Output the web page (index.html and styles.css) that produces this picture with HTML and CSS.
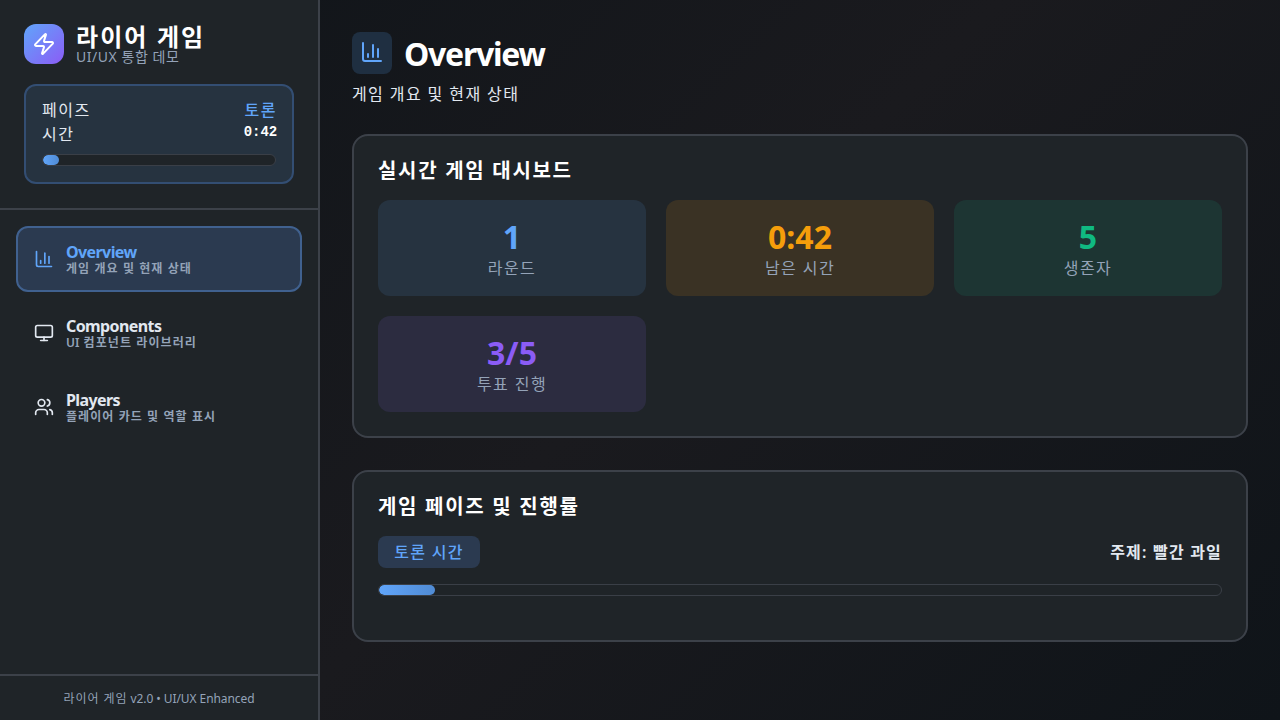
FILE: index.html
```html
<!DOCTYPE html>
<html lang="ko">
<head>
<meta charset="utf-8">
<title>라이어 게임</title>
<link rel="stylesheet" href="styles.css">
</head>
<body>
<div class="app">
  <aside class="sidebar">
    <header class="side-head">
      <div class="brand">
        <div class="logo"><svg class="icon" width="24" height="24" viewBox="0 0 24 24"><path d="M4 14a1 1 0 0 1-.78-1.63l9.9-10.2a.5.5 0 0 1 .86.46l-1.92 6.02A1 1 0 0 0 13 10h7a1 1 0 0 1 .78 1.63l-9.9 10.2a.5.5 0 0 1-.86-.46l1.92-6.02A1 1 0 0 0 11 14z"/></svg></div>
        <div>
          <div class="brand-name">라이어 게임</div>
          <div class="brand-sub">UI/UX 통합 데모</div>
        </div>
      </div>
      <div class="status">
        <div class="status-row"><span>페이즈</span><span class="status-phase">토론</span></div>
        <div class="status-row"><span>시간</span><span class="status-time">0:42</span></div>
        <div class="bar"><div class="bar-fill"></div></div>
      </div>
    </header>
    <nav class="nav">
      <a class="nav-item active">
        <svg class="icon" width="20" height="20" viewBox="0 0 24 24"><path d="M3 3v16a2 2 0 0 0 2 2h16"/><path d="M18 17V9"/><path d="M13 17V5"/><path d="M8 17v-3"/></svg>
        <div><div class="nav-title">Overview</div><div class="nav-desc">게임 개요 및 현재 상태</div></div>
      </a>
      <a class="nav-item">
        <svg class="icon" width="20" height="20" viewBox="0 0 24 24"><rect width="20" height="14" x="2" y="3" rx="2"/><path d="M8 21h8"/><path d="M12 17v4"/></svg>
        <div><div class="nav-title">Components</div><div class="nav-desc"><span class="latin">UI</span> 컴포넌트 라이브러리</div></div>
      </a>
      <a class="nav-item">
        <svg class="icon" width="20" height="20" viewBox="0 0 24 24"><path d="M16 21v-2a4 4 0 0 0-4-4H6a4 4 0 0 0-4 4v2"/><circle cx="9" cy="7" r="4"/><path d="M22 21v-2a4 4 0 0 0-3-3.87"/><path d="M16 3.13a4 4 0 0 1 0 7.75"/></svg>
        <div><div class="nav-title">Players</div><div class="nav-desc">플레이어 카드 및 역할 표시</div></div>
      </a>
    </nav>
    <footer class="side-foot"><span class="foot-ko">라이어 게임</span> v2.0 • UI/UX Enhanced</footer>
  </aside>
  <main class="main">
    <div class="page-head">
      <div class="page-icon"><svg class="icon" width="24" height="24" viewBox="0 0 24 24"><path d="M3 3v16a2 2 0 0 0 2 2h16"/><path d="M18 17V9"/><path d="M13 17V5"/><path d="M8 17v-3"/></svg></div>
      <h1 class="page-title">Overview</h1>
    </div>
    <p class="page-desc">게임 개요 및 현재 상태</p>
    <section class="card dashboard">
      <h2 class="card-title">실시간 게임 대시보드</h2>
      <div class="stats">
        <div class="stat blue"><div class="stat-value">1</div><div class="stat-label">라운드</div></div>
        <div class="stat amber"><div class="stat-value">0:42</div><div class="stat-label">남은 시간</div></div>
        <div class="stat green"><div class="stat-value">5</div><div class="stat-label">생존자</div></div>
        <div class="stat violet"><div class="stat-value">3/5</div><div class="stat-label">투표 진행</div></div>
      </div>
    </section>
    <section class="card progress">
      <h2 class="card-title">게임 페이즈 및 진행률</h2>
      <div class="phase-row"><span class="badge">토론 시간</span><span class="topic">주제: 빨간 과일</span></div>
      <div class="bar"><div class="bar-fill"></div></div>
    </section>
  </main>
</div>
</body>
</html>
```
FILE: styles.css
```css
* { box-sizing: border-box; margin: 0; padding: 0; }
body {
  width: 1280px;
  height: 720px;
  overflow: hidden;
  color: #e2e8f0;
  font-family: "Noto Sans", "Noto Sans CJK KR", sans-serif;
  font-size: 16px;
  line-height: 24px;
  background: linear-gradient(135deg, #0f1419 0%, #1a1a1e 50%, #0f1419 100%);
}
.app { display: flex; height: 720px; }
.icon { display: block; flex: none; fill: none; stroke: currentColor; stroke-width: 2; stroke-linecap: round; stroke-linejoin: round; }

.sidebar { display: flex; flex-direction: column; width: 320px; flex: none; background: #1f2428; border-right: 2px solid #3c4149; }
.side-head { height: 210px; padding: 24px; border-bottom: 2px solid #3c4149; }
.brand { display: flex; gap: 12px; height: 40px; margin-bottom: 20px; white-space: nowrap; }
.logo { display: grid; place-items: center; width: 40px; height: 40px; border-radius: 12px; color: #fff; background: linear-gradient(135deg, #60a5fa, #8b5cf6); }
.brand-name { height: 24px; font-size: 24px; line-height: 26px; font-weight: 700; letter-spacing: 2.1px; color: #fff; }
.brand-sub { font-size: 14px; line-height: 17px; letter-spacing: .55px; color: #94a3b8; }
.status { height: 100px; padding: 12px 16px; border: 2px solid #334e73; border-radius: 12px; background: #263340; }
.status-row { display: flex; justify-content: space-between; height: 24px; letter-spacing: 1.5px; }
.status-phase { color: #60a5fa; font-weight: 500; margin-right: -1px; }
.status-time { font-family: "Liberation Mono", monospace; font-size: 14px; line-height: 21px; font-weight: 700; letter-spacing: -.1px; margin-right: -1px; color: #fff; }
.bar { height: 12px; border: 1px solid #3a3f47; border-radius: 6px; background: #1f2428; overflow: hidden; }
.bar-fill { width: 6.7%; height: 100%; border-radius: 5px; background: linear-gradient(90deg, #60a5fa, #508bd4); }
.status .bar { margin-top: 8px; }
.nav { flex: 1; display: flex; flex-direction: column; gap: 8px; padding: 16px; }
.nav-item { display: flex; align-items: center; gap: 12px; height: 66px; padding: 0 16px; border: 2px solid transparent; border-radius: 12px; white-space: nowrap; }
.nav-item.active { color: #60a5fa; background: #2b3a50; border-color: #40618f; }
.nav-title { font-weight: 700; line-height: 18px; height: 16px; letter-spacing: -.6px; }
.nav-desc { font-size: 12px; line-height: 19px; height: 16px; font-weight: 600; letter-spacing: 1.08px; color: #94a3b8; }
.latin { letter-spacing: 0; }
.side-foot { height: 46px; padding-top: 14px; border-top: 2px solid #3c4149; text-align: center; font-size: 12px; line-height: 18px; letter-spacing: -.08px; color: #94a3b8; }
.foot-ko { letter-spacing: .95px; }

.main { flex: 1; padding: 32px; }
.page-head { display: flex; align-items: center; gap: 12px; height: 42px; }
.page-icon { display: flex; justify-content: center; width: 40px; height: 42px; padding-top: 8px; border-radius: 8px; color: #60a5fa; background: #1f2f41; }
.page-title { padding-top: 2px; font-size: 32px; line-height: 42px; font-weight: 700; letter-spacing: -1.25px; color: #fff; }
.page-desc { height: 24px; margin-top: 8px; letter-spacing: 1.4px; }
.card { padding: 20px 24px; border: 2px solid #3c4149; border-radius: 16px; background: #1f2428; }
.dashboard { height: 304px; margin-top: 28px; }
.progress { height: 172px; margin-top: 32px; }
.card-title { height: 28px; margin-bottom: 16px; font-size: 20px; line-height: 29px; font-weight: 700; letter-spacing: 1.7px; color: #fff; }
.stats { display: grid; grid-template-columns: repeat(3, 1fr); grid-auto-rows: 96px; gap: 20px; }
.stat { padding-top: 16px; border-radius: 12px; text-align: center; }
.stat-value { height: 40px; font-size: 32px; line-height: 41px; font-weight: 700; }
.stat-label { letter-spacing: 1.4px; color: #94a3b8; }
.blue { background: #263340; }
.blue .stat-value { color: #60a5fa; }
.amber { background: #3a3224; }
.amber .stat-value { color: #f59e0b; }
.green { background: #1d3533; }
.green .stat-value { color: #10b981; }
.violet { background: #2c2c40; }
.violet .stat-value { color: #8b5cf6; }
.phase-row { display: flex; justify-content: space-between; align-items: center; height: 32px; margin-bottom: 16px; letter-spacing: 1.3px; }
.badge { width: 102px; height: 32px; border-radius: 8px; text-align: center; line-height: 32px; font-weight: 500; color: #60a5fa; background: #2b3a50; }
.topic { font-weight: 600; letter-spacing: 1.2px; }
```
